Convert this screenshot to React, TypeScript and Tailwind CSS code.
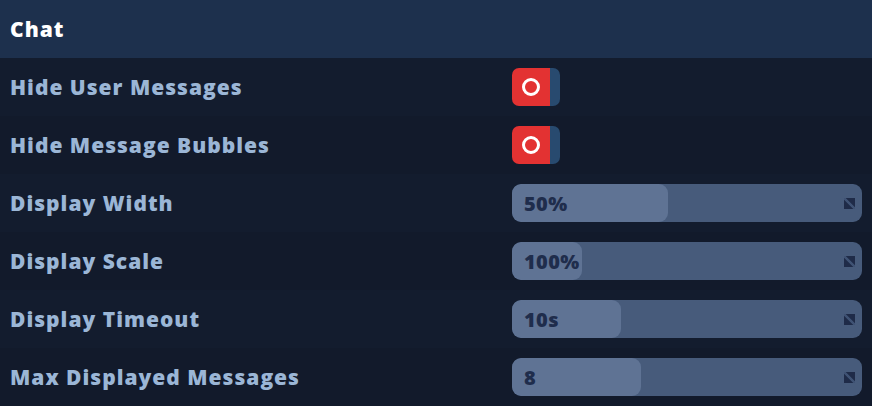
import React from "react";

const font = { fontFamily: "'Open Sans', Lato, sans-serif" };

function Toggle() {
  return (
    <div className="flex h-[38px] w-[48px] overflow-hidden rounded-[7px]">
      <div className="flex w-[38px] items-center justify-center bg-[#e33232]">
        <div className="h-[18px] w-[18px] rounded-full border-[3px] border-white" />
      </div>
      <div className="w-[10px] bg-[#284a6f]" />
    </div>
  );
}

function ResizeIcon() {
  return (
    <svg width="11" height="11" viewBox="0 0 11 11" className="shrink-0">
      <polygon points="1.5,0 11,0 11,9.5" fill="#1f2b48" />
      <polygon points="0,1.5 0,11 9.5,11" fill="#1f2b48" />
      <polygon points="0,0 1.5,0 11,9.5 11,11 9.5,11 0,1.5" fill="#3f5274" />
    </svg>
  );
}

function Slider({ value, fill }: { value: string; fill: number }) {
  return (
    <div className="relative flex h-[38px] w-[350px] items-center overflow-hidden rounded-[9px] bg-[#475b7b]">
      <div
        className="absolute left-0 top-0 h-full rounded-[9px] bg-[#5f7394]"
        style={{ width: fill }}
      />
      <span className="relative z-10 pl-[12px] pt-[2px] text-[20px] font-extrabold tracking-[0.4px] text-[#1f2d4c]">{value}</span>
      <div className="relative z-10 ml-auto pr-[7px]">
        <ResizeIcon />
      </div>
    </div>
  );
}

function Row({ label, children, alt }: { label: string; children: React.ReactNode; alt?: boolean }) {
  return (
    <div className={`flex h-[58px] items-center ${alt ? "bg-[#121a2b]" : "bg-[#131c2e]"}`}>
      <div className="w-[512px] pl-[10px] pt-[2px] text-[21px] font-extrabold tracking-[1px] text-[#9bb6d6]">{label}</div>
      {children}
    </div>
  );
}

export default function App() {
  return (
    <div className="h-[406px] w-[872px] overflow-hidden bg-[#131c2e]" style={font}>
      <div className="flex h-[58px] items-center bg-[#1d304d] pl-[10px] pt-[2px] text-[21px] font-extrabold tracking-[1px] text-white">
        Chat
      </div>
      <Row label="Hide User Messages">
        <Toggle />
      </Row>
      <Row label="Hide Message Bubbles" alt>
        <Toggle />
      </Row>
      <Row label="Display Width">
        <Slider value="50%" fill={156} />
      </Row>
      <Row label="Display Scale" alt>
        <Slider value="100%" fill={70} />
      </Row>
      <Row label="Display Timeout">
        <Slider value="10s" fill={109} />
      </Row>
      <Row label="Max Displayed Messages" alt>
        <Slider value="8" fill={129} />
      </Row>
    </div>
  );
}
